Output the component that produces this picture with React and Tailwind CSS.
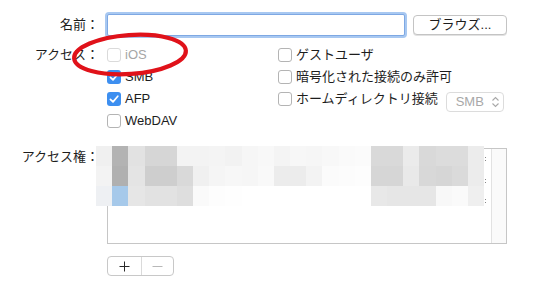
const rowA = [
  'bg-[#f0f0f0]', 'bg-[#b3b3b3]', 'bg-[#e2e2e2]', 'bg-[#d6d6d6]', 'bg-[#d6d6d6]', 'bg-[#f3f3f3]',
  'bg-[#f3f3f3]', 'bg-[#f4f4f4]', 'bg-[#f2f2f2]', 'bg-[#f6f6f6]', 'bg-[#f8f8f8]', 'bg-[#f4f4f4]',
  'bg-[#f7f7f7]', 'bg-[#f6f6f6]', 'bg-[#f8f8f8]', 'bg-[#fafafa]', 'bg-[#fbfbfb]', 'bg-[#d9d9d9]',
  'bg-[#d9d9d9]', 'bg-[#ebebeb]', 'bg-[#d9d9d9]', 'bg-[#dcdcdc]', 'bg-[#dcdcdc]', 'bg-[#ececec]',
];
const rowB = [
  'bg-[#f3f3f3]', 'bg-[#b0b0b0]', 'bg-[#e4e4e4]', 'bg-[#cecece]', 'bg-[#cecece]', 'bg-[#d9d9d9]',
  'bg-[#f0f0f0]', 'bg-[#f5f5f5]', 'bg-[#f7f7f7]', 'bg-[#f6f6f6]', 'bg-[#f9f9f9]', 'bg-[#ececec]',
  'bg-[#ececec]', 'bg-[#f3f3f3]', 'bg-[#fbfbfb]', 'bg-[#fcfcfc]', 'bg-[#fdfdfd]', 'bg-[#d6d6d6]',
  'bg-[#d6d6d6]', 'bg-[#e9e9e9]', 'bg-[#d8d8d8]', 'bg-[#d6d6d6]', 'bg-[#dadada]', 'bg-[#ececec]',
];
const rowC = [
  'bg-[#eef0f3]', 'bg-[#a6c9ea]', 'bg-[#e6e6e6]', 'bg-[#e2e2e2]', 'bg-[#e2e2e2]', 'bg-[#dedede]',
  'bg-[#fafafa]', 'bg-[#fdfdfd]', 'bg-[#fefefe]', 'bg-white', 'bg-white', 'bg-white',
  'bg-white', 'bg-white', 'bg-white', 'bg-white', 'bg-white', 'bg-[#e8e8e8]',
  'bg-[#e6e6e6]', 'bg-[#e6e6e6]', 'bg-[#e6e6e6]', 'bg-[#f8f8f8]', 'bg-[#fafafa]', 'bg-[#efefef]',
];

// checkbox, 14px square
const Check = ({ checked, disabled }) => (
  <span
    className={
      checked
        ? 'w-[14px] h-[14px] rounded-[3px] bg-[#3d8ff0] flex items-center justify-center shrink-0'
        : disabled
        ? 'w-[14px] h-[14px] rounded-[3px] border border-[#dadada] bg-white shrink-0'
        : 'w-[14px] h-[14px] rounded-[3px] border border-[#b4b4b4] bg-white shrink-0'
    }
  >
    {checked && (
      <svg width="14" height="14" viewBox="0 0 14 14">
        <path d="M3.4 7.3 L6 9.9 L10.8 4.2" fill="none" stroke="white" strokeWidth="1.7" strokeLinecap="round" strokeLinejoin="round" />
      </svg>
    )}
  </span>
);

const Option = ({ label, checked, disabled, children }) => (
  <div className="h-[22px] flex items-center">
    <Check checked={checked} disabled={disabled} />
    <span className={disabled ? 'ml-[4px] text-[#a6a6a6]' : 'ml-[4px]'}>{label}</span>
    {children}
  </div>
);

const App = () => {
  return (
    <div className="w-[540px] h-[284px] bg-white relative overflow-hidden text-[13px] text-[#1d1d1d] font-['Liberation_Sans','Noto_Sans_CJK_JP',sans-serif]">
      <div className="pt-[14px]">
        {/* name */}
        <div className="flex items-center h-[22px]">
          <div className="w-[99px] text-right leading-[22px]">名前：</div>
          <div className="ml-[8px] w-[298px] h-[22px] bg-white border border-[#7ea8e3] rounded-[2px] shadow-[0_0_0_2px_#a8c8f1]" />
          <button className="ml-[8px] w-[94px] h-[20px] bg-white border border-[#c4c4c4] rounded-[4px] shadow-[0_1px_0_#e2e2e2] leading-[18px] text-[13px] text-[#1d1d1d]">
            ブラウズ...
          </button>
        </div>

        {/* access */}
        <div className="flex mt-[8px]">
          <div className="w-[99px] text-right leading-[22px]">アクセス：</div>
          <div className="ml-[8px] w-[171px] flex flex-col">
            <Option label="iOS" disabled />
            <Option label="SMB" checked />
            <Option label="AFP" checked />
            <Option label="WebDAV" />
          </div>
          <div className="flex flex-col">
            <Option label="ゲストユーザ" />
            <Option label="暗号化された接続のみ許可" />
            <Option label="ホームディレクトリ接続">
              <div className="ml-[8px] mt-[6px] w-[58px] h-[20px] border border-[#dcdcdc] rounded-[4px] bg-white flex items-center pl-[9px] text-[#a8a8a8]">
                <span>SMB</span>
                <svg className="ml-[7px]" width="9" height="12" viewBox="0 0 9 12">
                  <path d="M1.5 4.5 L4.5 1.5 L7.5 4.5 M1.5 7.5 L4.5 10.5 L7.5 7.5" fill="none" stroke="#a8a8a8" strokeWidth="1.1" />
                </svg>
              </div>
            </Option>
          </div>
        </div>

        {/* rights */}
        <div className="flex mt-[16px]">
          <div className="w-[99px] text-right leading-[18px]">アクセス権：</div>
          <div className="ml-[8px] flex flex-col">
            <div className="w-[400px] h-[96px] border border-[#c6c6c6] flex">
              <div className="flex-1 flex justify-end">
                <div className="mr-[5px] flex flex-col">
                  <span className="mt-[8px] w-[1px] h-[1px] bg-[#888]" />
                  <span className="mt-[2px] w-[1px] h-[1px] bg-[#888]" />
                  <span className="mt-[18px] w-[1px] h-[1px] bg-[#888]" />
                  <span className="mt-[2px] w-[1px] h-[1px] bg-[#888]" />
                  <span className="mt-[16px] w-[1px] h-[1px] bg-[#888]" />
                  <span className="mt-[2px] w-[1px] h-[1px] bg-[#888]" />
                </div>
              </div>
              <div className="w-[15px] border-l border-[#e2e2e2] bg-[#fafafa]" />
            </div>
            <div className="mt-[12px] w-[67px] h-[20px] border border-[#c8c8c8] rounded-[4px] bg-white flex">
              <div className="w-[34px] border-r border-[#dadada] flex items-center justify-center">
                <svg width="11" height="11" viewBox="0 0 11 11">
                  <path d="M5.5 0.5 V10.5 M0.5 5.5 H10.5" stroke="#2a2a2a" strokeWidth="1" />
                </svg>
              </div>
              <div className="flex-1 flex items-center justify-center">
                <svg width="11" height="11" viewBox="0 0 11 11">
                  <path d="M0.5 5.5 H10.5" stroke="#b8b8b8" strokeWidth="1" />
                </svg>
              </div>
            </div>
          </div>
        </div>
      </div>

      {/* pixelated privacy overlay */}
      <div className="absolute left-[96px] top-[146px] w-[388px] h-[60px] flex flex-col">
        {[rowA, rowB, rowC].map((row, r) => (
          <div key={r} className="flex h-[20px]">
            {row.map((c, i) => (
              <div key={i} className={`flex-1 ${c}`} />
            ))}
          </div>
        ))}
      </div>

      {/* red annotation */}
      <svg className="absolute left-0 top-0 pointer-events-none" width="540" height="284">
        <ellipse cx="130" cy="54.5" rx="56" ry="19.5" transform="rotate(-4 130 54.5)" fill="none" stroke="#e0121a" strokeWidth="4.2" />
      </svg>
    </div>
  );
};

export default App;
